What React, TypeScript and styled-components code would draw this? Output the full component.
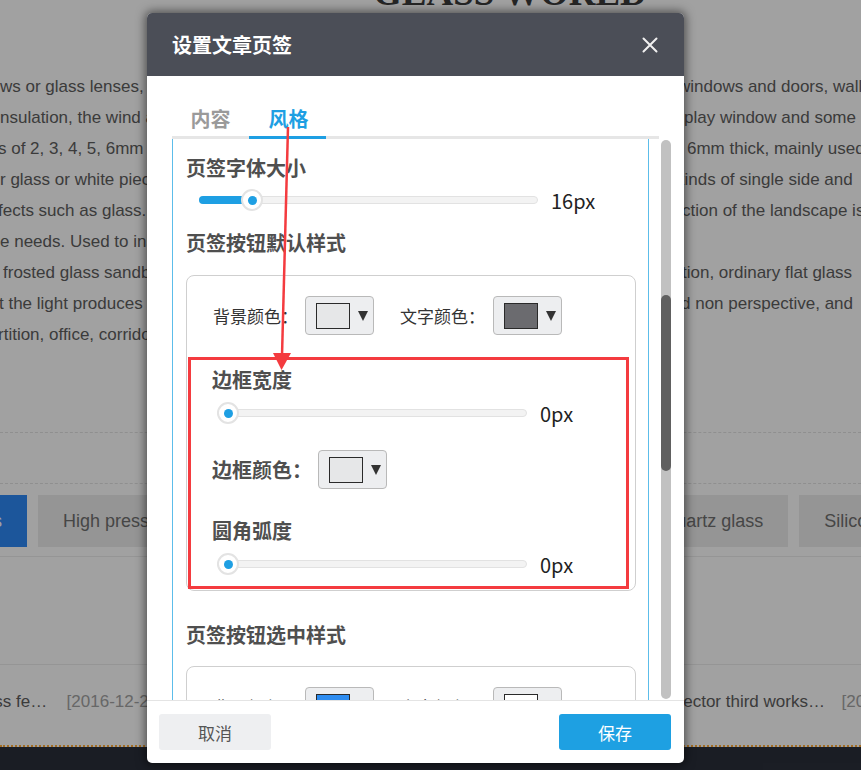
import React from "react";
import styled, { createGlobalStyle } from "styled-components";

const GlobalStyle = createGlobalStyle`
  html, body { margin: 0; padding: 0; background: #fff; }
  body { width: 861px; height: 770px; overflow: hidden; font-family: "Liberation Sans", Arial, sans-serif; }
  * { box-sizing: border-box; }
`;

const Page = styled.div`
  position: relative;
  width: 861px;
  height: 770px;
  overflow: hidden;
  background: #fff;
  color: #5e5e5e;
  font-family: "Liberation Sans", Arial, sans-serif;
`;

const SiteTitle = styled.h1`
  margin: -26px 0 0 0;
  padding-left: 373px;
  font-family: "Liberation Serif", "Times New Roman", serif;
  font-weight: bold;
  font-size: 37px;
  line-height: 37px;
  color: #3c3c3c;
  white-space: nowrap;
`;

const Article = styled.div`
  margin-top: 60px;
  display: grid;
  grid-template-columns: 684px 1fr;
  font-size: 17px;
  line-height: 31px;
  height: 279px;
`;

const ArticleCell = styled.div<{ $shift: number }>`
  white-space: nowrap;
  overflow: hidden;
  text-indent: ${(p) => p.$shift}px;
`;

const DashedRule = styled.div<{ $gap: number }>`
  margin-top: ${(p) => p.$gap}px;
  border-top: 1px dashed #e2e2e2;
`;

const SolidRule = styled.div<{ $gap: number }>`
  margin-top: ${(p) => p.$gap}px;
  border-top: 1px solid #ececec;
`;

const CategoryBar = styled.div`
  margin-top: 11px;
  margin-left: -110px;
  display: flex;
  gap: 11px;
  height: 52px;
`;

const Category = styled.div<{ $active?: boolean }>`
  flex: none;
  padding: 0 25px;
  line-height: 52px;
  font-size: 18px;
  white-space: nowrap;
  background: ${(p) => (p.$active ? "#2d88f5" : "#ececec")};
  color: ${(p) => (p.$active ? "#fff" : "#707070")};
`;

const NewsRow = styled.div`
  margin-top: 24px;
  margin-left: -397px;
  width: 1335px;
  display: flex;
  justify-content: space-between;
  font-size: 17px;
  line-height: 26px;
`;

const NewsItem = styled.div`
  width: 560px;
  flex: none;
  display: flex;
  gap: 15px;
`;

const NewsTitle = styled.span`
  flex: 1;
  min-width: 0;
  overflow: hidden;
  text-overflow: ellipsis;
  white-space: nowrap;
  color: #5e5e5e;
`;

const NewsDate = styled.span`
  flex: none;
  color: #a3a3a3;
`;

const DottedRule = styled.div`
  margin-top: 30px;
  border-top: 2px dotted #ffad3c;
`;

const SiteFooter = styled.div`
  height: 40px;
  background: #2a2f3a;
`;

const Backdrop = styled.div`
  position: absolute;
  inset: 0;
  background: rgba(0, 0, 0, 0.37);
`;

const Modal = styled.div`
  position: absolute;
  left: 147px;
  top: 13px;
  width: 537px;
  height: 750px;
  display: flex;
  flex-direction: column;
  background: #fff;
  border-radius: 5px;
  overflow: hidden;
  box-shadow: 0 0 10px 2px rgba(0, 0, 0, 0.5);
  font-family: "Noto Sans CJK SC", "Liberation Sans", sans-serif;
`;

const ModalHeader = styled.div`
  flex: none;
  height: 63px;
  background: #4b4e57;
  display: flex;
  align-items: center;
  justify-content: space-between;
  padding: 0 26px 0 25px;
`;

const ModalTitle = styled.div`
  color: #fff;
  font-size: 20px;
  font-weight: 700;
`;

const CloseButton = styled.button`
  width: 16px;
  height: 16px;
  padding: 0;
  border: none;
  background: none;
  display: flex;
`;

const TabBar = styled.div`
  flex: none;
  margin: 25px 25px 0;
  display: flex;
  border-bottom: 3px solid #e6e6e6;
`;

const Tab = styled.div<{ $active?: boolean }>`
  width: 77px;
  height: 38px;
  margin-bottom: -3px;
  padding-left: ${(p) => (p.$active ? 2 : 0)}px;
  border-bottom: 3px solid ${(p) => (p.$active ? "#1e9fe3" : "transparent")};
  text-align: center;
  font-size: 20px;
  font-weight: 700;
  line-height: 36px;
  color: ${(p) => (p.$active ? "#1e9fe3" : "#9a9a9a")};
`;

const ScrollArea = styled.div`
  flex: 1;
  min-height: 0;
  display: flex;
  padding: 0 13px 0 25px;
`;

const Panel = styled.div`
  flex: 1;
  min-width: 0;
  border-left: 1px solid #5cbdea;
  border-right: 1px solid #5cbdea;
  padding: 0 12px 0 13px;
  overflow: hidden;
`;

const ScrollTrack = styled.div`
  flex: none;
  width: 10px;
  margin: 1px 0 1px 12px;
  border-radius: 5px;
  background: #c1c1c1;
`;

const ScrollThumb = styled.div`
  margin-top: 155px;
  height: 176px;
  border-radius: 5px;
  background: #606060;
`;

const SectionTitle = styled.div<{ $gap: number }>`
  margin-top: ${(p) => p.$gap}px;
  font-size: 20px;
  font-weight: 700;
  line-height: 30px;
  color: #4f4f4f;
  white-space: nowrap;
`;

const Card = styled.div<{ $gap: number }>`
  margin-top: ${(p) => p.$gap}px;
  border: 1px solid #cfcfcf;
  border-radius: 8px;
  padding: 20px 0 0 0;
`;

const PickerRow = styled.div<{ $gap?: number }>`
  margin-top: ${(p) => p.$gap ?? 0}px;
  display: flex;
  align-items: center;
  height: 39px;
`;

const PickerGroup = styled.div<{ $indent: number; $space: number }>`
  display: flex;
  align-items: center;
  gap: ${(p) => p.$space}px;
  margin-left: ${(p) => p.$indent}px;
`;

const FieldLabel = styled.span<{ $strong?: boolean }>`
  font-size: ${(p) => (p.$strong ? 20 : 17)}px;
  font-weight: ${(p) => (p.$strong ? 700 : 400)};
  color: ${(p) => (p.$strong ? "#4f4f4f" : "#333")};
  white-space: nowrap;
`;

const ColorPicker = styled.div`
  display: flex;
  align-items: center;
  gap: 8px;
  width: 69px;
  height: 39px;
  padding-left: 10px;
  border: 1px solid #b9b9b9;
  border-radius: 4px;
  background: #edeef0;
`;

const Swatch = styled.div<{ $color: string }>`
  width: 34px;
  height: 26px;
  border: 1px solid #2a2a2a;
  background: ${(p) => p.$color};
`;

const Caret = styled.div`
  width: 0;
  height: 0;
  border-left: 5px solid transparent;
  border-right: 5px solid transparent;
  border-top: 10px solid #333;
`;

const HighlightBox = styled.div`
  margin: 22px 6px 1px 1px;
  border: 3px solid #f43b3f;
  padding: 5px 21px 9px 21px;
`;

const SliderRow = styled.div<{ $gap: number; $indent: number }>`
  margin-top: ${(p) => p.$gap}px;
  margin-left: ${(p) => p.$indent}px;
  height: 26px;
  display: flex;
  align-items: center;
`;

const Track = styled.div<{ $width: number }>`
  position: relative;
  flex: none;
  width: ${(p) => p.$width}px;
  height: 8px;
  border: 1px solid #e2e2e2;
  border-radius: 4px;
  background: #f3f3f3;
`;

const TrackFill = styled.div`
  position: absolute;
  left: -1px;
  top: -1px;
  height: 8px;
  border-radius: 4px 0 0 4px;
  background: #1e9fe3;
`;

const Thumb = styled.div`
  position: absolute;
  top: 50%;
  width: 22px;
  height: 22px;
  margin-top: -11px;
  border-radius: 50%;
  background: #fff;
  border: 2px solid #e3e3e3;
  display: flex;
  align-items: center;
  justify-content: center;
`;

const ThumbDot = styled.div`
  width: 9px;
  height: 9px;
  border-radius: 50%;
  background: #1e9fe3;
`;

const SliderValue = styled.span`
  margin-left: 13px;
  font-size: 20px;
  color: #222;
`;

const ModalFooter = styled.div`
  flex: none;
  height: 63px;
  border-top: 1px solid #e4e4e4;
  display: flex;
  align-items: center;
  justify-content: space-between;
  padding: 0 13px 0 12px;
`;

const FooterButton = styled.button<{ $primary?: boolean }>`
  width: 112px;
  height: 36px;
  border: none;
  border-radius: 3px;
  font-family: "Noto Sans CJK SC", sans-serif;
  font-size: 17px;
  background: ${(p) => (p.$primary ? "#1ea0e2" : "#eeeff1")};
  color: ${(p) => (p.$primary ? "#fff" : "#555")};
`;

const Annotation = styled.svg`
  position: absolute;
  left: 0;
  top: 0;
  pointer-events: none;
`;

type SliderProps = { value: number; min: number; max: number; width: number; gap: number; indent: number; unit: string };

function Slider({ value, min, max, width, gap, indent, unit }: SliderProps) {
  const pct = (value - min) / (max - min);
  const thumbLeft = Math.round(pct * (width - 22)) - 1;
  return (
    <SliderRow $gap={gap} $indent={indent}>
      <Track $width={width}>
        {pct > 0 && <TrackFill style={{ width: thumbLeft + 11 }} />}
        <Thumb style={{ left: thumbLeft }}>
          <ThumbDot />
        </Thumb>
      </Track>
      <SliderValue>
        {value}
        {unit}
      </SliderValue>
    </SliderRow>
  );
}

function Picker({ color }: { color: string }) {
  return (
    <ColorPicker>
      <Swatch $color={color} />
      <Caret />
    </ColorPicker>
  );
}

function ColorPair({ bg, fg }: { bg: string; fg: string }) {
  return (
    <PickerRow>
      <PickerGroup $indent={26} $space={7}>
        <FieldLabel>背景颜色：</FieldLabel>
        <Picker color={bg} />
      </PickerGroup>
      <PickerGroup $indent={26} $space={8}>
        <FieldLabel>文字颜色：</FieldLabel>
        <Picker color={fg} />
      </PickerGroup>
    </PickerRow>
  );
}

const articleRows: { left: string; ls: number; right: string; rs: number }[] = [
  { left: "ws or glass lenses, made of glass panels", ls: 0, right: "windows and doors, walls", rs: -6 },
  { left: "nsulation, the wind and rain", ls: 0, right: "play window and some", rs: 0 },
  { left: "s of 2, 3, 4, 5, 6mm thick", ls: -2, right: "6mm thick, mainly used", rs: 3 },
  { left: "r glass or white pieces", ls: 0, right: "kinds of single side and", rs: -8 },
  { left: "fects such as glass. The", ls: -2, right: "ction of the landscape is", rs: -2 },
  { left: "e needs. Used to insulate", ls: 0, right: "", rs: 0 },
  { left: "frosted glass sandblasted", ls: 3, right: "tion, ordinary flat glass", rs: -2 },
  { left: "t the light produces", ls: -1, right: "d non perspective, and", rs: -3 },
  { left: "rtition, office, corridor", ls: -2, right: "", rs: 0 },
];

export default function App() {
  return (
    <>
      <GlobalStyle />
      <Page>
        <SiteTitle>GLASS WORED</SiteTitle>
        <Article>
          {articleRows.map((r, i) => (
            <React.Fragment key={i}>
              <ArticleCell $shift={r.ls}>{r.left}</ArticleCell>
              <ArticleCell $shift={r.rs}>{r.right}</ArticleCell>
            </React.Fragment>
          ))}
        </Article>
        <DashedRule $gap={82} />
        <DashedRule $gap={50} />
        <CategoryBar>
          <Category $active>Float glass</Category>
          <Category>High pressure glass</Category>
          <Category>Tempered glass</Category>
          <Category>Ultra-clear glass</Category>
          <Category>Quartz glass</Category>
          <Category>Silicon glass</Category>
        </CategoryBar>
        <SolidRule $gap={9} />
        <SolidRule $gap={107} />
        <NewsRow>
          <NewsItem>
            <NewsTitle>Comparisons between tempered glass and plain glass features</NewsTitle>
            <NewsDate>[2016-12-28]</NewsDate>
          </NewsItem>
          <NewsItem>
            <NewsTitle>Congratulations on success of glass projector third works project completed</NewsTitle>
            <NewsDate>[2016-12-26]</NewsDate>
          </NewsItem>
        </NewsRow>
        <DottedRule />
        <SiteFooter />

        <Backdrop />

        <Modal>
          <ModalHeader>
            <ModalTitle>设置文章页签</ModalTitle>
            <CloseButton aria-label="关闭">
              <svg width="16" height="16" viewBox="0 0 16 16">
                <path d="M1.5 1.5 L14.5 14.5 M14.5 1.5 L1.5 14.5" stroke="#f0f0f0" strokeWidth="2" strokeLinecap="round" />
              </svg>
            </CloseButton>
          </ModalHeader>
          <TabBar>
            <Tab>内容</Tab>
            <Tab $active>风格</Tab>
          </TabBar>
          <ScrollArea>
            <Panel>
              <SectionTitle $gap={14}>页签字体大小</SectionTitle>
              <Slider value={16} min={12} max={42} width={339} gap={4} indent={13} unit="px" />
              <SectionTitle $gap={15}>页签按钮默认样式</SectionTitle>
              <Card $gap={17}>
                <ColorPair bg="#e6e7e8" fg="#6b6b6f" />
                <HighlightBox>
                  <SectionTitle $gap={0}>边框宽度</SectionTitle>
                  <Slider value={0} min={0} max={10} width={310} gap={5} indent={5} unit="px" />
                  <PickerRow $gap={24}>
                    <PickerGroup $indent={0} $space={6}>
                      <FieldLabel $strong>边框颜色：</FieldLabel>
                      <Picker color="#e6e7e8" />
                    </PickerGroup>
                  </PickerRow>
                  <SectionTitle $gap={27}>圆角弧度</SectionTitle>
                  <Slider value={0} min={0} max={20} width={310} gap={5} indent={5} unit="px" />
                </HighlightBox>
              </Card>
              <SectionTitle $gap={29}>页签按钮选中样式</SectionTitle>
              <Card $gap={16}>
                <ColorPair bg="#2d8cf0" fg="#ffffff" />
              </Card>
            </Panel>
            <ScrollTrack>
              <ScrollThumb />
            </ScrollTrack>
          </ScrollArea>
          <ModalFooter>
            <FooterButton>取消</FooterButton>
            <FooterButton $primary>保存</FooterButton>
          </ModalFooter>
        </Modal>

        <Annotation width="861" height="770" viewBox="0 0 861 770">
          <line x1="288" y1="127" x2="282" y2="356" stroke="#f43b3f" strokeWidth="2.5" />
          <polygon points="273,353 291,353 281.5,370" fill="#f43b3f" />
        </Annotation>
      </Page>
    </>
  );
}
